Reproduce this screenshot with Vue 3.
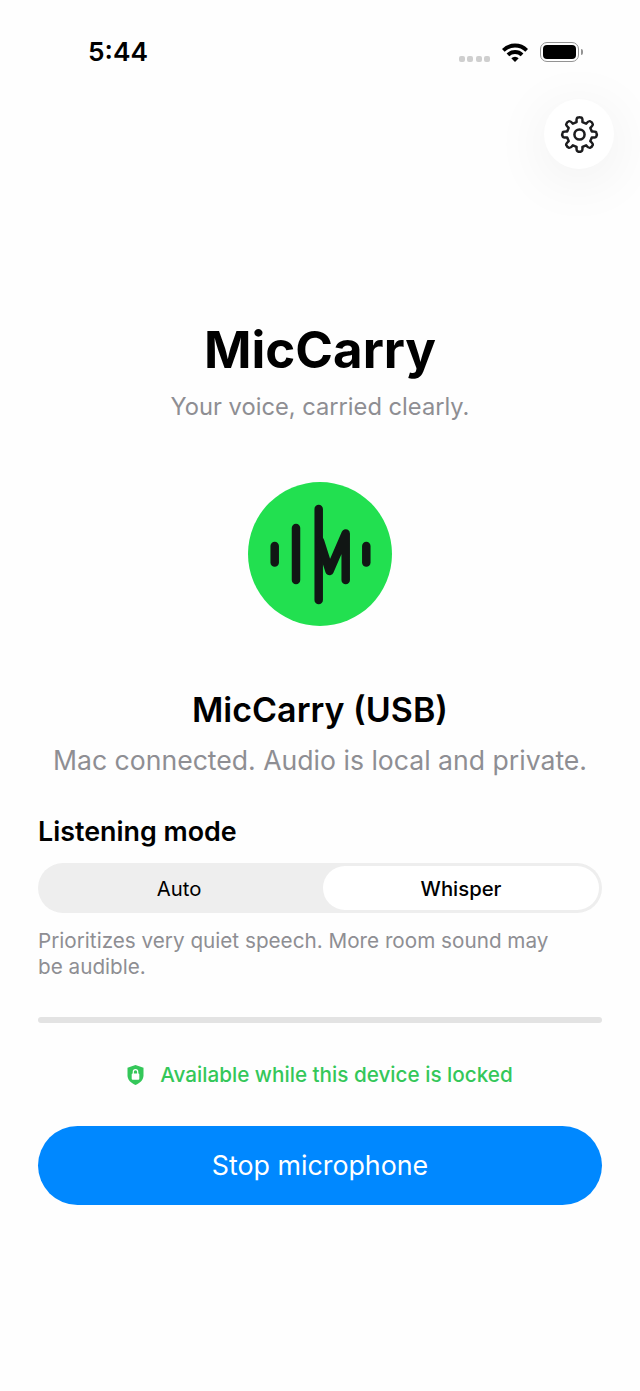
<script setup>
const modes = [
  { label: 'Auto', active: false },
  { label: 'Whisper', active: true },
];

// eight rounded teeth round the hub
const gearPath = (() => {
  const pts = [];
  const teeth = 8;
  for (let i = 0; i < teeth; i++) {
    const a = (i / teeth) * Math.PI * 2 - Math.PI / 2;
    const step = (Math.PI * 2) / teeth;
    const at = (r, off) => {
      const x = 20 + r * Math.cos(a + off * step);
      const y = 20 + r * Math.sin(a + off * step);
      return `${x.toFixed(2)} ${y.toFixed(2)}`;
    };
    pts.push(`${i === 0 ? 'M' : 'L'}${at(13, -0.3)}`);
    pts.push(`C${at(15, -0.27)} ${at(17.4, -0.24)} ${at(17.4, -0.13)}`);
    pts.push(`Q${at(18.2, 0)} ${at(17.4, 0.13)}`);
    pts.push(`C${at(17.4, 0.24)} ${at(15, 0.27)} ${at(13, 0.3)}`);
  }
  return pts.join(' ') + ' Z';
})();
</script>

<template>
  <div class="page">
    <div class="status">
      <span class="time">5:44</span>
      <div class="statusIcons">
        <div class="dots"><i></i><i></i><i></i><i></i></div>
        <svg class="wifi" width="26" height="19" viewBox="0 0 26 19">
          <path d="M13 19L9.300 15.300A5.200 5.200 0 0 1 16.700 15.300Z" fill="#000" />
          <path d="M5.930 11.930A10 10 0 0 1 20.070 11.930" fill="none" stroke="#000" stroke-width="3.800" />
          <path d="M1.330 7.330A16.500 16.500 0 0 1 24.670 7.330" fill="none" stroke="#000" stroke-width="3.800" />
        </svg>
        <div class="battery"><div class="batteryFill"></div></div>
        <div class="batteryCap"></div>
      </div>
    </div>

    <div class="topRow">
      <button class="settings">
        <svg width="39" height="39" viewBox="0 0 40 40" fill="none" stroke="#1c1c1e" stroke-width="2.600" stroke-linejoin="round">
          <path :d="gearPath" />
          <circle cx="20" cy="20" r="5.200" />
        </svg>
      </button>
    </div>

    <h1 class="title">MicCarry</h1>
    <p class="tagline">Your voice, carried clearly.</p>

    <svg class="logo" width="144" height="144" viewBox="0 0 144 144">
      <circle cx="72" cy="72" r="72" fill="#22e050" />
      <g fill="none" stroke="#111614" stroke-width="8.500" stroke-linecap="round" stroke-linejoin="round">
        <path d="M26.700 64V80.500" />
        <path d="M48 46V98" />
        <path d="M70.700 27V118" />
        <path d="M72 59L81.500 89L97.700 51.500V98" />
        <path d="M118.300 64V80.500" />
      </g>
    </svg>

    <h2 class="device">MicCarry (USB)</h2>
    <p class="deviceNote">Mac connected. Audio is local and private.</p>

    <div class="modeBlock">
      <h3 class="modeLabel">Listening mode</h3>
      <div class="segments">
        <div v-for="m in modes" :key="m.label" class="segment" :class="{ active: m.active }">{{ m.label }}</div>
      </div>
      <p class="modeNote">Prioritizes very quiet speech. More room sound may be audible.</p>
      <div class="level"></div>
    </div>

    <div class="locked">
      <svg width="17" height="20" viewBox="0 0 17 20">
        <path d="M8.500 0L16.500 2.800V10.500C16.500 15 13 18 8.500 20C4 18 0.500 15 0.500 10.500V2.800Z" fill="#34c759" />
        <rect x="4.700" y="8.500" width="7.600" height="6.200" rx="1" fill="#fff" />
        <path d="M6.300 9V6.900a2.200 2.200 0 0 1 4.400 0V9" fill="none" stroke="#fff" stroke-width="1.200" />
      </svg>
      <span>Available while this device is locked</span>
    </div>

    <button class="stop">Stop microphone</button>
  </div>
</template>

<style scoped>
.page{
  width: 640px;
  height: 1391px;
  overflow: hidden;
  background-color: #fefefe;
  font-family: Inter, "Liberation Sans", sans-serif;
  display: flex;
  flex-direction: column;
  align-items: center;
  color: #000;
}
.status{
  width: 100%;
  height: 99px;
  box-sizing: border-box;
  display: flex;
  justify-content: space-between;
  align-items: flex-start;
  padding: 37px 57px 0 88px;
}
.time{
  font-size: 26.300px;
  font-weight: 600;
  line-height: 29px;
}
.statusIcons{
  display: flex;
  align-items: center;
  height: 30px;
}
.dots{
  display: flex;
  gap: 2.300px;
  margin-top: 13px;
  margin-right: 12px;
}
.dots i{
  width: 6px;
  height: 6px;
  border-radius: 2px;
  background-color: #cfcfcf;
}
.wifi{
  margin-right: 12px;
}
.battery{
  width: 39px;
  height: 20px;
  box-sizing: border-box;
  border: 1.500px solid #939393;
  border-radius: 7px;
  padding: 2px;
}
.batteryFill{
  width: 100%;
  height: 100%;
  background-color: #000;
  border-radius: 4px;
}
.batteryCap{
  width: 2px;
  height: 6px;
  margin-left: 2px;
  background-color: #939393;
  border-radius: 0 2px 2px 0;
}
.topRow{
  width: 100%;
  display: flex;
  justify-content: flex-end;
  padding-right: 26px;
  box-sizing: border-box;
}
.settings{
  width: 70px;
  height: 70px;
  padding: 0;
  border: none;
  border-radius: 50%;
  background-color: #fff;
  box-shadow: 0 10px 60px rgba(0, 0, 0, .07);
  display: flex;
  align-items: center;
  justify-content: center;
}
.title{
  margin: 150px 0 0;
  font-size: 51px;
  line-height: 62px;
  font-weight: 700;
}
.tagline{
  margin: 11px 0 0;
  font-size: 23.700px;
  line-height: 30px;
  color: #8e8e93;
}
.logo{
  margin-top: 60px;
}
.device{
  margin: 62px 0 0;
  font-size: 34px;
  line-height: 44px;
  font-weight: 600;
}
.deviceNote{
  margin: 11px 0 0;
  font-size: 26.600px;
  line-height: 34px;
  color: #8e8e93;
}
.modeBlock{
  width: 564px;
  margin-top: 36px;
}
.modeLabel{
  margin: 0;
  font-size: 26.850px;
  line-height: 36px;
  font-weight: 600;
}
.segments{
  margin-top: 14px;
  height: 50px;
  box-sizing: border-box;
  display: flex;
  gap: 6px;
  background-color: #eeeeee;
  border-radius: 25px;
  padding: 3px;
}
.segment{
  flex: 1;
  display: flex;
  align-items: center;
  justify-content: center;
  font-size: 20.300px;
  font-weight: 400;
  border-radius: 22px;
}
.segment.active{
  background-color: #fff;
  font-weight: 500;
}
.modeNote{
  margin: 15px 0 0;
  width: 530px;
  font-size: 20.700px;
  line-height: 26px;
  color: #8e8e93;
}
.level{
  margin-top: 37px;
  height: 6px;
  border-radius: 3px;
  background-color: #e3e3e3;
}
.locked{
  margin-top: 37px;
  display: flex;
  align-items: center;
  gap: 16px;
  font-size: 20.700px;
  line-height: 30px;
  font-weight: 450;
  color: #34c759;
}
.stop{
  margin-top: 36px;
  width: 564px;
  height: 79px;
  padding: 0 0 2px;
  border: none;
  border-radius: 40px;
  background-color: #0088ff;
  color: #fff;
  font-family: inherit;
  font-size: 26.800px;
  font-weight: 400;
}
</style>
